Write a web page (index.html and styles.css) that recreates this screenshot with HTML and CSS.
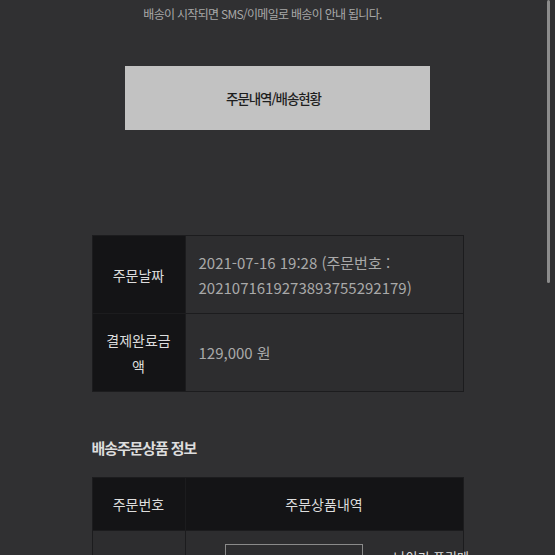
FILE: index.html
```html
<!DOCTYPE html>
<html lang="ko">
<head>
  <meta charset="UTF-8">
  <meta name="viewport" content="width=device-width, initial-scale=1.0">
  <title>주문완료</title>
  <link rel="stylesheet" href="styles.css">
</head>
<body>
  <div class="page">
    <p class="notice">배송이 시작되면 SMS/이메일로 배송이 안내 됩니다.</p>

    <a class="btn" href="#">주문내역/배송현황</a>

    <table class="info">
      <tr>
        <th>주문날짜</th>
        <td>2021-07-16 19:28 (주문번호 :<br>2021071619273893755292179)</td>
      </tr>
      <tr>
        <th>결제완료금<br>액</th>
        <td>129,000 원</td>
      </tr>
    </table>

    <h3 class="title">배송주문상품 정보</h3>

    <table class="goods">
      <tr>
        <th class="col-no">주문번호</th>
        <th>주문상품내역</th>
      </tr>
      <tr>
        <td class="col-no"></td>
        <td>
          <div class="item">
            <div class="thumb"></div>
            <div class="name">나이키 프리메</div>
          </div>
        </td>
      </tr>
    </table>
  </div>
  <div class="scrollbar"></div>
</body>
</html>
```

FILE: styles.css
```css
* {
  margin: 0;
  padding: 0;
  box-sizing: border-box;
}
html, body {
  height: 100%;
  overflow: hidden;
}
body {
  font-family: "Noto Sans CJK KR", "Noto Sans", sans-serif;
  background-color: #303032;
  color: #aaa;
}
.page {
  width: 372px;
  margin: 0 auto;
  padding-top: 5px;
  display: flex;
  flex-direction: column;
  align-items: center;
}
.notice {
  font-size: 12px;
  line-height: 18px;
  color: #a8a8a8;
  white-space: nowrap;
  letter-spacing: -0.7px;
  padding-right: 30px;
}
.btn {
  display: flex;
  align-items: center;
  justify-content: center;
  width: 305px;
  height: 64px;
  margin-top: 43px;
  padding-right: 8px;
  background: #c2c2c2;
  color: #1e1e1e;
  font-size: 13.5px;
  font-weight: 500;
  text-decoration: none;
  letter-spacing: -1.1px;
}
table {
  width: 372px;
  border-collapse: collapse;
  table-layout: fixed;
}
th, td {
  border: 1px solid #1c1c1e;
}
th {
  width: 93px;
  background: #141416;
  color: #ddd;
  font-weight: normal;
  font-size: 14px;
  line-height: 26px;
  text-align: center;
}
.info {
  margin-top: 105px;
}
.info td {
  background: #2d2d2f;
  font-size: 15px;
  line-height: 25px;
  padding: 0 13px;
  height: 78px;
  color: #a9a9a9;
  word-break: break-all;
}
.title {
  align-self: flex-start;
  margin-top: 45px;
  font-size: 15px;
  font-weight: bold;
  color: #ddd;
  letter-spacing: -1.1px;
}
.goods {
  margin-top: 19px;
}
.goods th {
  height: 53px;
  width: auto;
}
.goods th.col-no {
  width: 93px;
}
.goods td {
  background: #2d2d2f;
  height: 90px;
  vertical-align: top;
}
.item {
  display: flex;
  padding: 13px 0 0 39px;
  gap: 31px;
}
.thumb {
  flex-shrink: 0;
  width: 138px;
  height: 80px;
  border: 1px solid #8a8a8a;
}
.name {
  font-size: 13px;
  line-height: 18px;
  color: #ddd;
  margin-top: 4px;
  white-space: nowrap;
}
.scrollbar {
  position: fixed;
  top: 0;
  right: 5px;
  width: 3px;
  height: 283px;
  background: #8c8c8c;
  border-radius: 2px;
}
```
